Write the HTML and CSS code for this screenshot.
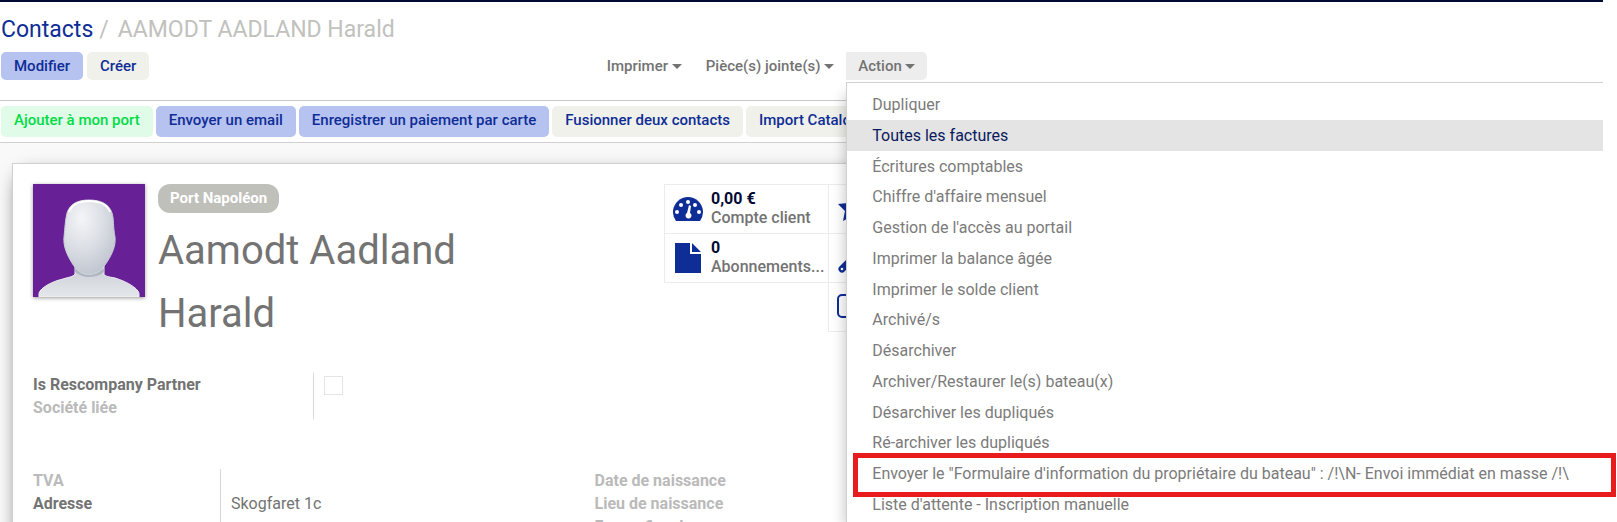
FILE: index.html
```html
<!DOCTYPE html>
<html lang="fr">
<head>
    <meta charset="UTF-8">
    <meta name="viewport" content="width=device-width, initial-scale=1.0">
    <title>Contacts</title>
    <link rel="stylesheet" href="styles.css">
</head>
<body>
    <div class="page">
        <header class="control-panel">
            <nav class="breadcrumb">
                <a href="#">Contacts</a>
                <span class="slash">/</span>
                <span class="current">AAMODT AADLAND Harald</span>
            </nav>
            <div class="toolbar">
                <div class="main-buttons">
                    <button class="btn primary">Modifier</button>
                    <button class="btn">Créer</button>
                </div>
                <div class="dropdowns">
                    <button class="btn toggle">Imprimer <i class="caret"></i></button>
                    <button class="btn toggle">Pièce(s) jointe(s) <i class="caret"></i></button>
                    <div class="dropdown">
                        <button class="btn toggle open">Action <i class="caret"></i></button>
                        <ul class="menu">
                            <li><a href="#">Dupliquer</a></li>
                            <li><a href="#" class="active">Toutes les factures</a></li>
                            <li><a href="#">Écritures comptables</a></li>
                            <li><a href="#">Chiffre d'affaire mensuel</a></li>
                            <li><a href="#">Gestion de l'accès au portail</a></li>
                            <li><a href="#">Imprimer la balance âgée</a></li>
                            <li><a href="#">Imprimer le solde client</a></li>
                            <li><a href="#">Archivé/s</a></li>
                            <li><a href="#">Désarchiver</a></li>
                            <li><a href="#">Archiver/Restaurer le(s) bateau(x)</a></li>
                            <li><a href="#">Désarchiver les dupliqués</a></li>
                            <li><a href="#">Ré-archiver les dupliqués</a></li>
                            <li class="marked"><a href="#">Envoyer le "Formulaire d'information du propriétaire du bateau" : /!\N- Envoi immédiat en masse /!\</a></li>
                            <li><a href="#">Liste d'attente - Inscription manuelle</a></li>
                        </ul>
                    </div>
                </div>
            </div>
        </header>

        <div class="statusbar">
            <button class="btn success">Ajouter à mon port</button>
            <button class="btn primary">Envoyer un email</button>
            <button class="btn primary">Enregistrer un paiement par carte</button>
            <button class="btn">Fusionner deux contacts</button>
            <button class="btn">Import Catalogue</button>
        </div>

        <main class="form-view">
            <div class="sheet">
                <div class="sheet-top">
                    <svg class="avatar" viewBox="0 0 112 113" role="img" aria-label="Photo">
                        <defs>
                            <radialGradient id="face" cx="0.35" cy="0.25" r="0.8">
                                <stop offset="0" stop-color="#f4f5f7"/>
                                <stop offset="0.5" stop-color="#dcdfe5"/>
                                <stop offset="1" stop-color="#bfc5cf"/>
                            </radialGradient>
                            <linearGradient id="bust" x1="0" y1="0" x2="0" y2="1">
                                <stop offset="0" stop-color="#c9cdd5"/>
                                <stop offset="1" stop-color="#e4e7ea"/>
                            </linearGradient>
                        </defs>
                        <rect width="112" height="113" fill="#672096"/>
                        <path d="M42 80V90C40 93 36 93 30 95C17 98 6 105 6 110V113H106V110C106 105 95 98 82 94C76 93 71 92 71 90V80Z" fill="url(#bust)" stroke="#eef0f2" stroke-width="1"/>
                        <path d="M42 84C47 90 52 91 56 91C61 91 66 89 71 84V88C66 92 61 93 56 93C51 93 46 91 42 88Z" fill="#8e98a8" opacity="0.5"/>
                        <path d="M56 16C68 16 76 20 79 29C81 35 80 43 82 53C83 62 79 70 74 78C69 86 63 90 56 90C49 90 43 86 39 79C34 71 30 62 31 53C32 44 32 37 34 29C37 20 44 16 56 16Z" fill="url(#face)" stroke="#c9cdd5" stroke-width="1"/>
                        <path d="M36 28C39 20 46 17 56 17C66 17 74 20 77 28" fill="none" stroke="#fff" stroke-width="2"/>
                    </svg>
                    <div class="identity">
                        <span class="badge">Port Napoléon</span>
                        <h1>Aamodt Aadland Harald</h1>
                    </div>
                    <div class="stats">
                        <button class="stat">
                            <svg viewBox="0 0 30 24" class="stat-icon">
                                <path d="M3 24A15 15 0 1 1 27 24Z" fill="#0f2d97"/>
                                <g fill="#fff">
                                    <circle cx="4" cy="15" r="2"/>
                                    <circle cx="8" cy="8" r="2"/>
                                    <circle cx="15" cy="5" r="2"/>
                                    <circle cx="22" cy="8" r="2"/>
                                    <circle cx="26" cy="15" r="2"/>
                                    <path d="M16 8L18 9L17 16A3 3 0 1 1 14 16Z"/>
                                </g>
                            </svg>
                            <span class="stat-text"><b>0,00 €</b><span>Compte client</span></span>
                        </button>
                        <button class="stat" aria-label="Favoris">
                            <svg viewBox="0 0 30 30" class="stat-icon">
                                <path d="M15 0L19 9L29 10L22 17L24 27L15 22L6 27L8 17L1 10L11 9Z" fill="#0f2d97"/>
                            </svg>
                        </button>
                        <button class="stat second-row">
                            <svg viewBox="0 0 30 30" class="stat-icon">
                                <path d="M2 0H17V11H28V30H2ZM19 0L28 9H19Z" fill="#0f2d97"/>
                            </svg>
                            <span class="stat-text"><b>0</b><span>Abonnements...</span></span>
                        </button>
                        <button class="stat second-row middle" aria-label="Interventions">
                            <svg viewBox="0 0 30 30" class="stat-icon">
                                <path d="M5 26L20 11" stroke="#0f2d97" stroke-width="7" stroke-linecap="round"/>
                                <path d="M28 6A7 7 0 1 1 22 1L20 6L24 9Z" fill="#0f2d97"/>
                                <circle cx="5" cy="26" r="1.3" fill="#fff"/>
                            </svg>
                        </button>
                        <button class="stat third-row middle" aria-label="Documents">
                            <svg viewBox="0 0 30 30" class="stat-icon">
                                <rect x="1" y="3" width="27" height="22" rx="4" fill="none" stroke="#0f2d97" stroke-width="2"/>
                            </svg>
                        </button>
                    </div>
                </div>

                <div class="group partner">
                    <div class="labels">
                        <label for="rescompany">Is Rescompany Partner</label>
                        <span class="empty">Société liée</span>
                    </div>
                    <div class="values">
                        <input type="checkbox" id="rescompany">
                    </div>
                </div>

                <div class="columns">
                    <div class="group">
                        <div class="labels">
                            <span class="empty">TVA</span>
                            <span>Adresse</span>
                        </div>
                        <div class="values address">
                            <span>Skogfaret 1c</span>
                        </div>
                    </div>
                    <div class="group">
                        <div class="labels">
                            <span class="empty">Date de naissance</span>
                            <span class="empty">Lieu de naissance</span>
                            <span class="empty">Forme fiscale</span>
                        </div>
                    </div>
                </div>
            </div>
        </main>
    </div>
</body>
</html>
```

FILE: styles.css
```css
* {
    box-sizing: border-box;
}

body {
    margin: 0;
    padding-right: 14px;
    height: 100vh;
    overflow: hidden;
    background-color: white;
    color: #737373;
    font-family: Roboto, sans-serif;
    font-size: 16px;
    line-height: 24px;
}

a {
    color: #0f2d97;
    text-decoration: none;
}

.page {
    display: flex;
    flex-direction: column;
    height: 100%;
    border-top: 2px solid #000a33;
}

/* header */
.control-panel {
    padding: 13px 0 20px 1px;
    border-bottom: 1px solid #c8c8c8;
}

.breadcrumb {
    display: flex;
    gap: 6px;
    font-size: 23px;
    line-height: 30px;
}

.slash,
.current {
    color: #c1c1bd;
}

.current {
    margin-left: 3px;
}

.toolbar {
    display: grid;
    grid-template-columns: 37% 1fr;
    column-gap: 1px;
    margin-top: 7px;
}

.main-buttons {
    display: flex;
    gap: 4px;
}

.dropdowns {
    display: flex;
}

.btn {
    height: 28px;
    padding: 0 13px 1px;
    border: none;
    border-radius: 5px;
    background-color: #f0f1eb;
    color: #0f2d97;
    font-family: inherit;
    font-size: 15px;
    font-weight: 500;
    white-space: nowrap;
    cursor: pointer;
}

.btn.primary {
    background-color: #b6c2ef;
}

.btn.success {
    background-color: #e0fbe8;
    color: #00dc46;
}

.btn.toggle {
    padding: 0 12px 1px;
    background-color: transparent;
    color: #737373;
}

.btn.toggle.open {
    border-radius: 0 5px 5px 0;
    background-color: #ededed;
}

.caret {
    display: inline-block;
    border: 5px solid transparent;
    border-top-color: #737373;
    border-bottom: none;
    vertical-align: middle;
}

.dropdown {
    position: relative;
}

.menu {
    position: absolute;
    top: 30px;
    left: 0;
    z-index: 10;
    margin: 0;
    padding: 6px 0;
    border: 1px solid #d0d0d0;
    border-right: none;
    background-color: white;
    box-shadow: -8px 6px 12px -6px rgba(0, 0, 0, 0.2);
    list-style: none;
    white-space: nowrap;
}

.menu a {
    display: block;
    padding: 0 34px 0 25px;
    color: #7b7b7b;
    line-height: 31px;
}

.menu li:nth-child(4n) a {
    line-height: 30px;
}

.menu a.active {
    background-color: #e4e4e4;
    color: #0a1a5c;
}

.marked {
    position: relative;
}

.marked::after {
    content: "";
    position: absolute;
    inset: -5px -13px -8px 6px;
    border: 5px solid #e81c1c;
    pointer-events: none;
}

/* status bar */
.statusbar {
    display: flex;
    gap: 3px;
    padding: 5px 1px;
    border-bottom: 1px solid #d0d0d0;
}

.statusbar .btn {
    height: 31px;
    padding-bottom: 3px;
}

/* form */
.form-view {
    flex: 1;
    min-height: 0;
    padding: 20px 12px 0;
    overflow: hidden;
    background-color: #f9f9f9;
}

.sheet {
    max-width: 1165px;
    padding: 20px;
    border: 1px solid #d0d0d0;
    background-color: white;
    box-shadow: 0 5px 20px -10px black;
}

.sheet-top {
    display: flex;
    align-items: flex-start;
    height: 189px;
}

.avatar {
    flex: none;
    width: 112px;
    height: 113px;
    box-shadow: 0 1px 4px rgba(0, 0, 0, 0.4);
}

.identity {
    width: 320px;
    margin-left: 13px;
}

.badge {
    display: block;
    width: fit-content;
    padding: 0 12px;
    border-radius: 12px;
    background-color: #c0c0bb;
    color: white;
    font-size: 15px;
    font-weight: bold;
    line-height: 29px;
}

h1 {
    margin: 6px 0 0;
    font-size: 40px;
    font-weight: normal;
    line-height: 63px;
}

.stats {
    display: grid;
    grid-template-columns: repeat(3, 164px);
    grid-auto-rows: 49px;
    margin-left: auto;
}

.stat {
    display: flex;
    align-items: center;
    gap: 8px;
    margin: 0 -1px -1px 0;
    padding: 0 8px;
    border: 1px solid #ececec;
    background-color: white;
    color: #737373;
    font-family: inherit;
    font-size: 16px;
    text-align: left;
}

.second-row {
    grid-row: 2;
}

.third-row {
    grid-row: 3;
}

.middle {
    grid-column: 2;
}

.stat-icon {
    flex: none;
    width: 30px;
}

.stat-text {
    display: flex;
    flex-direction: column;
    padding-bottom: 2px;
    font-weight: 500;
    line-height: 19px;
}

.stat-text b {
    color: #000a33;
}

.group {
    display: flex;
    font-weight: bold;
    line-height: 23px;
}

.labels {
    display: flex;
    flex-direction: column;
    width: 187px;
}

.empty {
    color: #bababa;
}

.values {
    padding-left: 10px;
    border-left: 1px solid #d8d8d8;
    font-weight: normal;
}

.partner .labels {
    width: 280px;
}

input[type="checkbox"] {
    appearance: none;
    display: block;
    width: 19px;
    height: 19px;
    margin: 3px 0;
    border: 1px solid #e5e5e5;
}

.columns {
    display: grid;
    grid-template-columns: 1fr 1fr;
    margin-top: 50px;
}

.address {
    padding-top: 23px;
}
```
